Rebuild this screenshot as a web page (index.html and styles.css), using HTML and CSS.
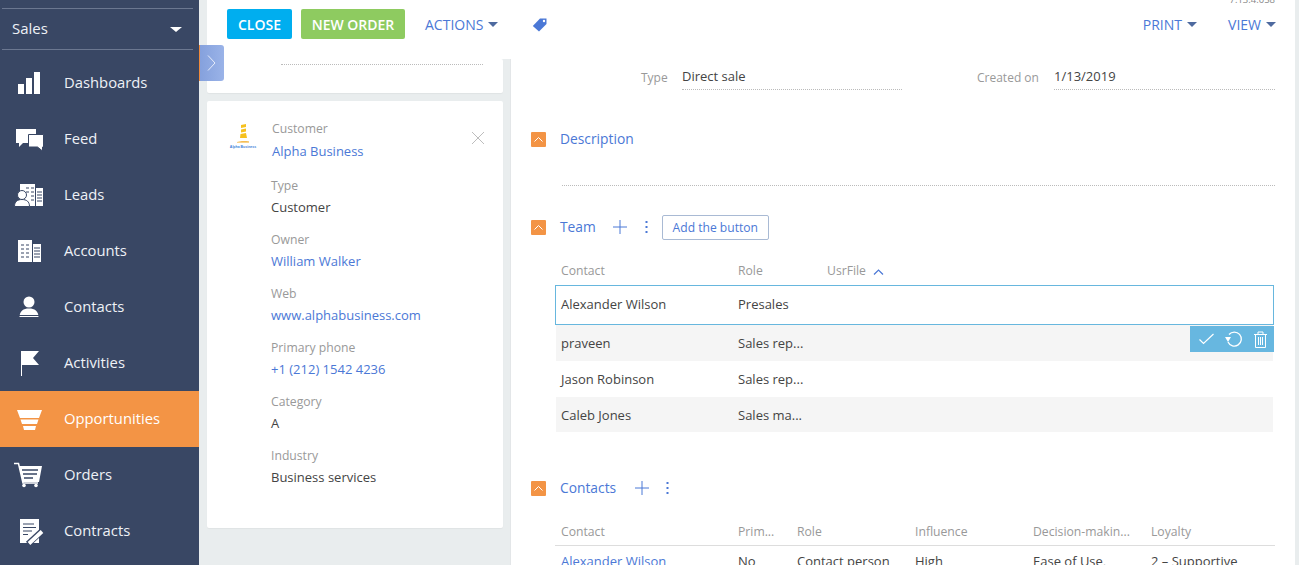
FILE: index.html
```html
<!DOCTYPE html>
<html lang="en">
<head>
<meta charset="utf-8">
<title>Opportunity</title>
<link rel="stylesheet" href="styles.css">
</head>
<body>
<div class="app">
  <nav class="sidebar">
    <div class="workplace"><span>Sales</span><i class="wp-caret"></i></div>
    <a class="nav-item"><span class="nav-icon"><svg width="30" height="30" viewBox="0 0 30 30"><path fill="#fff" d="M4 16h6v10H4zM12 10h6v16h-6zM20 4h6v22h-6z"/></svg></span>Dashboards</a>
    <a class="nav-item"><span class="nav-icon"><svg width="30" height="30" viewBox="0 0 30 30"><path fill="#fff" d="M2 5h20v14H9l-4 4v-4H2z"/><path fill="#fff" stroke="#394764" d="M14.500 10.500h15v12.500h-1v4l-5-4h-9z"/></svg></span>Feed</a>
    <a class="nav-item"><span class="nav-icon"><svg width="30" height="30" viewBox="0 0 30 30"><path fill="#fff" d="M6 4h15v22H6zM22 8h7v18h-7z"/><path stroke="#394764" stroke-width="1.200" d="M12 8h3M17 8h3M12 12h3M17 12h3M17 16h3M17 20h3M23 12h5M23 15h5M23 18h5M23 21h5"/><circle cx="8" cy="15" r="4.500" fill="#fff" stroke="#394764"/><path fill="#fff" stroke="#394764" d="M.5 26.500c0-5 3-7 7.500-7s7.500 2 7.500 7z"/></svg></span>Leads</a>
    <a class="nav-item"><span class="nav-icon"><svg width="30" height="30" viewBox="0 0 30 30"><path fill="#fff" d="M4 4h14v22H4zM19 8h8v18h-8z"/><path stroke="#394764" stroke-width="1.200" d="M7 9h3M12 9h3M7 13h3M12 13h3M7 17h3M12 17h3M7 21h3M12 21h3M20 12h6M20 15h6M20 18h6M20 21h6"/></svg></span>Accounts</a>
    <a class="nav-item"><span class="nav-icon"><svg width="30" height="30" viewBox="0 0 30 30"><circle cx="15" cy="10" r="5.500" fill="#fff"/><path fill="#fff" d="M5.500 25c0-6 4-8.500 9.500-8.500s9.500 2.500 9.500 8.500z"/><path stroke="#394764" d="M5 23.500h20"/></svg></span>Contacts</a>
    <a class="nav-item"><span class="nav-icon"><svg width="30" height="30" viewBox="0 0 30 30"><path fill="#fff" d="M7 3h1v25H7zM8 3h17l-6 7 6 7H8z"/></svg></span>Activities</a>
    <a class="nav-item nav-active"><span class="nav-icon"><svg width="30" height="30" viewBox="0 0 30 30"><path fill="#fff" d="M3 6h25l-3 8H6zM6.500 15.500h18l-1.500 4.500H8zM9 22h13l-1 4H10z"/></svg></span>Opportunities</a>
    <a class="nav-item"><span class="nav-icon"><svg width="30" height="30" viewBox="0 0 30 30"><path fill="none" stroke="#fff" stroke-width="1.500" d="M0 3.500h4.500L9 23h15"/><path fill="#fff" d="M5 6h23l-3 16H9z"/><path stroke="#394764" stroke-width="1.300" d="M8 10h16M9 14h14M10 18h9"/><circle cx="10" cy="25.500" r="1.800" fill="#fff"/><circle cx="22" cy="25.500" r="1.800" fill="#fff"/></svg></span>Orders</a>
    <a class="nav-item"><span class="nav-icon"><svg width="30" height="30" viewBox="0 0 30 30"><path fill="#fff" d="M6 3h19v24H6z"/><path stroke="#394764" stroke-width="1.200" d="M9 8h11M9 11.500h13M9 15h9M9 18.500h5"/><path stroke="#394764" stroke-width="6" d="M14 28l13-12"/><path stroke="#fff" stroke-width="3.800" d="M15 27.500l13-12"/></svg></span>Contracts</a>
  </nav>

  <div class="content">
    <button class="panel-toggle"><svg width="9" height="16" viewBox="0 0 9 16"><path d="M1 .5L8 8l-7 7.500" stroke="#e6ecfa" fill="none"/></svg></button>
    <header class="topbar">
      <span class="version">7.13.4.058</span>
      <button class="btn btn-close">CLOSE</button>
      <button class="btn btn-new">NEW ORDER</button>
      <a class="menu menu-actions">ACTIONS<i class="caret"></i></a>
      <svg class="tag" width="15" height="14" viewBox="0 0 15 14"><path fill="#4b78d6" d="M8 .5h6.500V6L7 13.500 .8 8z"/><circle cx="12" cy="3" r="1.200" fill="#fff"/></svg>
      <span class="spacer"></span>
      <a class="menu menu-print">PRINT<i class="caret"></i></a>
      <a class="menu menu-view">VIEW<i class="caret"></i></a>
    </header>

    <div class="columns">
      <aside class="left-col">
        <div class="card card-stub"><div class="stub-line"></div></div>
        <div class="card card-customer">
          <div class="cust-head">
            <div class="logo">
              <svg width="12" height="19" viewBox="0 0 12 19"><path fill="#f6c11f" d="M4 1l5-1v3L4 4zM4 5.500l5-1v3l-5 1zM3.500 10l5.500-1 1 5H3z"/><path fill="#f2a71b" d="M0 18c3-1 8-1 12-.5v1H0z"/></svg>
              <span class="logo-text">Alpha Business</span>
            </div>
            <div class="cust-name">
              <div class="label">Customer</div>
              <a class="link">Alpha Business</a>
            </div>
            <svg class="remove" width="14" height="14" viewBox="0 0 14 14"><path stroke="#bdbdbd" fill="none" d="M1 1l12 12M13 1L1 13"/></svg>
          </div>
          <div class="field"><div class="label">Type</div><div>Customer</div></div>
          <div class="field"><div class="label">Owner</div><a class="link">William Walker</a></div>
          <div class="field"><div class="label">Web</div><a class="link">www.alphabusiness.com</a></div>
          <div class="field"><div class="label">Primary phone</div><a class="link">+1 (212) 1542 4236</a></div>
          <div class="field"><div class="label">Category</div><div>A</div></div>
          <div class="field"><div class="label">Industry</div><div>Business services</div></div>
        </div>
      </aside>

      <main class="right-col">
        <div class="form-row">
          <span class="form-label form-label-type">Type</span><span class="form-value form-value-type">Direct sale</span>
          <span class="form-label form-label-created">Created on</span><span class="form-value form-value-created">1/13/2019</span>
        </div>

        <section class="section section-desc">
          <div class="sec-head"><span class="collapse"><svg width="9" height="5" viewBox="0 0 9 5"><path d="M.5 4.500l4-4 4 4" stroke="#fff" fill="none"/></svg></span><span class="sec-title">Description</span></div>
          <div class="desc-line"></div>
        </section>

        <section class="section section-team">
          <div class="sec-head">
            <span class="collapse"><svg width="9" height="5" viewBox="0 0 9 5"><path d="M.5 4.500l4-4 4 4" stroke="#fff" fill="none"/></svg></span><span class="sec-title">Team</span>
            <svg class="plus plus-team" width="14" height="14" viewBox="0 0 14 14"><path stroke="#4b78d6" d="M7 0v14M0 7h14"/></svg>
            <svg class="dots" width="3" height="12" viewBox="0 0 3 12"><path fill="#4b78d6" d="M.5 0h2v2h-2zM.5 5h2v2h-2zM.5 10h2v2h-2z"/></svg>
            <button class="add-btn">Add the button</button>
          </div>
          <div class="table team-table">
            <div class="row team-row team-header"><span>Contact</span><span>Role</span><span>UsrFile<svg class="sort" width="11" height="6" viewBox="0 0 11 6"><path d="M1 5.500l4.500-4.500 4.500 4.500" stroke="#4b78d6" fill="none" stroke-width="1.200"/></svg></span></div>
            <div class="row team-row team-selected"><span>Alexander Wilson</span><span>Presales</span></div>
            <div class="row team-row team-body shaded"><span>praveen</span><span>Sales rep...</span></div>
            <div class="row team-row team-body"><span>Jason Robinson</span><span>Sales rep...</span></div>
            <div class="row team-row team-body shaded team-last"><span>Caleb Jones</span><span>Sales ma...</span></div>
            <div class="row-actions">
              <svg width="15" height="12" viewBox="0 0 15 12"><path d="M.5 6.500l4 4L14.500 1" stroke="#fff" fill="none" stroke-width="1.200"/></svg>
              <svg width="19" height="17" viewBox="0 0 19 17"><path d="M5 3.500A7 7 0 1 1 4 11" stroke="#fff" fill="none" stroke-width="1.300"/><path fill="#fff" d="M1 6h6l-3 5z"/></svg>
              <svg width="15" height="17" viewBox="0 0 15 17"><path d="M1 3.500h13M5 3.500V1h5v2.500M2.500 3.500V16.500h10V3.500M5.500 6v8M7.500 6v8M9.500 6v8" stroke="#fff" fill="none"/></svg>
            </div>
          </div>
        </section>

        <section class="section section-contacts">
          <div class="sec-head">
            <span class="collapse"><svg width="9" height="5" viewBox="0 0 9 5"><path d="M.5 4.500l4-4 4 4" stroke="#fff" fill="none"/></svg></span><span class="sec-title">Contacts</span>
            <svg class="plus plus-contacts" width="14" height="14" viewBox="0 0 14 14"><path stroke="#4b78d6" d="M7 0v14M0 7h14"/></svg>
            <svg class="dots dots-contacts" width="3" height="12" viewBox="0 0 3 12"><path fill="#4b78d6" d="M.5 0h2v2h-2zM.5 5h2v2h-2zM.5 10h2v2h-2z"/></svg>
          </div>
          <div class="table contacts-table">
            <div class="row contacts-row contacts-header"><span>Contact</span><span>Prim...</span><span>Role</span><span>Influence</span><span>Decision-makin...</span><span>Loyalty</span></div>
            <div class="row contacts-row contacts-body"><a class="link">Alexander Wilson</a><span>No</span><span>Contact person</span><span>High</span><span>Ease of Use,</span><span>2 – Supportive</span></div>
          </div>
        </section>
      </main>
    </div>
  </div>
</div>
</body>
</html>
```
FILE: styles.css
```css
* { box-sizing: border-box; }
html, body { margin: 0; height: 565px; overflow: hidden; }
body { background: #e9edee; color: #444; font: 13px/18px "Open Sans", sans-serif; }
a { text-decoration: none; }
.app { display: flex; height: 565px; overflow: hidden; }

.sidebar { width: 199px; flex: none; background: #394764; color: #eef1f6; padding-top: 8px; }
.workplace { display: flex; align-items: center; justify-content: space-between; height: 42px; margin: 0 6px 0 2px; padding: 0 11px 2px 10px; border-top: 1px solid #6b7790; border-bottom: 1px solid #6b7790; font-size: 15px; }
.wp-caret { width: 0; height: 0; margin-top: 2px; border: 6px solid transparent; border-top: 5px solid #fff; border-bottom: 0; }
.nav-item { display: flex; align-items: center; height: 56px; padding-bottom: 2px; font-size: 14.800px; color: #eef1f6; }
.sidebar .workplace + .nav-item { margin-top: 5px; }
.nav-icon { display: flex; justify-content: center; width: 58px; margin: 2px 6px 0 0; }
.nav-active { background: #f39445; color: #fff; }

.content { position: relative; flex: 1; display: flex; flex-direction: column; min-width: 0; padding-right: 4px; }
.panel-toggle { position: absolute; z-index: 2; left: 0; top: 45px; display: flex; align-items: center; justify-content: center; width: 25px; height: 36px; padding: 0 2px 0 0; border: 0; border-left: 1px solid #ef8a3c; border-radius: 0 3px 3px 0; background: linear-gradient(90deg, #85a1dd, #9ab3e8); }
.topbar { position: relative; display: flex; align-items: flex-start; height: 59px; margin-left: 8px; padding: 9px 19px 0 20px; background: #fff; flex: none; }
.version { position: absolute; top: -7px; right: 20px; font-size: 9.500px; line-height: 14px; color: #888; }
.btn { height: 30px; border: 0; border-radius: 2px; padding: 2px 0 0; color: #fff; font: 600 14px/28px "Open Sans", sans-serif; }
.btn-close { width: 65px; background: #00aeef; }
.btn-new { width: 104px; margin-left: 9px; background: #8ecb60; }
.menu { display: flex; align-items: center; height: 30px; padding-top: 2px; font-size: 14px; color: #4b78d6; }
.menu-actions { margin-left: 20px; }
.caret { width: 0; height: 0; margin: 0 0 2px 5px; border: 5px solid transparent; border-top: 5px solid #4e6a9f; border-bottom: 0; }
.tag { margin: 9px 0 0 34px; }
.spacer { flex: 1; }
.menu-view { margin-left: 31px; }

.columns { flex: 1; display: flex; min-height: 0; }
.left-col { width: 312px; flex: none; padding: 0 7px 0 8px; border-right: 1px solid #e3e6e8; }
.card { background: #fff; border-radius: 2px; box-shadow: 0 1px 1px rgba(0,0,0,.04); }
.card-stub { height: 34px; padding: 5px 20px 0 74px; }
.stub-line { border-top: 1px dotted #bbb; }
.card-customer { height: 427px; margin-top: 8px; padding: 19px 0 0 64px; }
.cust-head { position: relative; height: 57px; display: flex; }
.logo { position: absolute; left: -48px; top: 4px; width: 40px; display: flex; flex-direction: column; align-items: center; }
.logo-text { font: 700 3.500px/6px "Liberation Sans", sans-serif; color: #3d80d8; white-space: nowrap; margin-top: 1px; }
.cust-name { margin-left: 1px; }
.cust-name .label { margin-bottom: 4px; }
.remove { position: absolute; left: 200px; top: 11px; }
.label { color: #999; font-size: 12.200px; margin-bottom: 3px; }
.field { height: 54px; }
.link { color: #4b78d6; }

.right-col { flex: 1; background: #fff; padding: 5px 20px 0; min-width: 0; }
.form-row { display: flex; align-items: flex-start; height: 26px; padding-top: 3px; }
.form-label { color: #999; font-size: 12px; padding-top: 2px; }
.form-value { height: 23px; border-bottom: 1px dotted #bbb; }
.form-label-type { width: 26px; margin-left: 110px; }
.form-value-type { width: 220px; margin-left: 15px; }
.form-label-created { width: 62px; margin-left: 75px; white-space: nowrap; }
.form-value-created { flex: 1; margin-left: 15px; }

.section-desc { margin-top: 37px; }
.section-team { margin-top: 29px; }
.section-contacts { margin-top: 44px; }
.sec-head { display: flex; align-items: center; height: 24px; }
.collapse { display: flex; align-items: center; justify-content: center; width: 15px; height: 15px; border-radius: 1px; background: #f39445; }
.sec-title { margin-left: 14px; font-size: 13.800px; color: #4b78d6; }
.desc-line { margin: 34px 0 0 31px; border-top: 1px dotted #bbb; }
.plus-team { margin-left: 17px; }
.plus-contacts { margin-left: 19px; }
.dots { margin-left: 18px; }
.dots-contacts { margin-left: 17px; }
.add-btn { width: 107px; height: 25px; margin-left: 14px; padding: 0; background: #fff; border: 1px solid #a9bad4; border-radius: 2px; color: #4b78d6; font: 12.100px/23px "Open Sans", sans-serif; }

.table { position: relative; margin-left: 24px; }
.team-table { margin-top: 23px; width: 719px; }
.contacts-table { margin-top: 20px; }
.row { display: grid; align-items: center; padding-left: 6px; white-space: nowrap; }
.team-row { grid-template-columns: 177px 89px 1fr; }
.team-header { height: 23px; padding-bottom: 5px; color: #999; font-size: 12.200px; }
.team-selected { height: 40px; border: 1px solid #67b7de; padding: 0 0 2px 5px; }
.team-body { height: 36px; margin: 0 1px; padding-left: 5px; }
.team-last { height: 35px; }
.shaded { background: #f5f5f5; }
.sort { margin-left: 7px; }
.row-actions { position: absolute; top: 64px; right: 0; display: flex; align-items: center; justify-content: space-between; width: 84px; height: 26px; padding: 0 6px 0 9px; background: #67b7e0; }

.contacts-row { grid-template-columns: 177px 59px 118px 118px 118px 1fr; }
.contacts-header { height: 26px; border-bottom: 1px solid #ddd; padding-bottom: 1px; color: #999; font-size: 12.200px; }
.contacts-body { height: 30px; }
```
